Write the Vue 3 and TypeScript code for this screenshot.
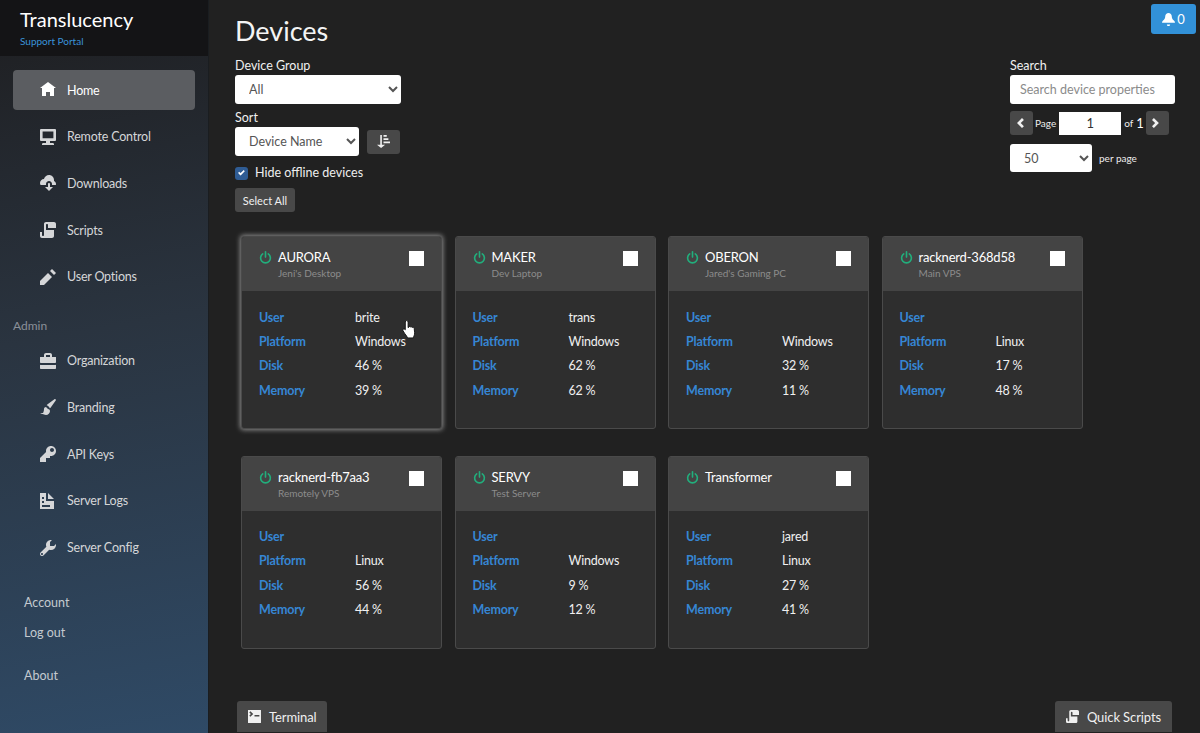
<script setup lang="ts">
const P = {
  home: 'M4 0l-4 3h1v4h2v-2h2v2h2v-4.03l1 .03-4-3z',
  monitor: 'M.5 0a.5.5 0 0 0-.5.5v5a.5.5 0 0 0 .5.5h2.5v1h-1c-.55 0-1 .23-1 .5v.5h6v-.5c0-.27-.45-.5-1-.5h-1v-1h2.500a.5.5 0 0 0 .5-.5v-5a.5.5 0 0 0-.5-.5h-7zm.8 1.200h5.400v3.400h-5.400v-3.400z',
  cloud: 'M4.5 0c-1.21 0-2.27.86-2.5 2-1.1 0-2 .9-2 2 0 .37.11.71.28 1h2.72v-.5c0-.83.67-1.5 1.5-1.5s1.5.67 1.5 1.5v.5h1.91c.06-.16.09-.32.09-.5 0-.65-.42-1.29-1-1.5v-.5c0-1.38-1.12-2.5-2.5-2.5zm-.16 4a.5.5 0 0 0-.34.5v1.5h-1.5l2 2 2-2h-1.5v-1.5a.5.5 0 0 0-.59-.5.5.5 0 0 0-.06 0z',
  script: 'M3 0c-.55 0-1 .45-1 1v5.5c0 .28-.22.5-.5.5s-.5-.22-.5-.5v-1.5h-1v2c0 .55.45 1 1 1h5c.55 0 1-.45 1-1v-3h-4v-2.5c0-.28.22-.5.5-.5s.5.22.5.5v1.500h4v-2c0-.55-.45-1-1-1h-4z',
  pencil: 'M6 0l-1 1 2 2 1-1-2-2zm-2 2l-4 4v2h2l4-4-2-2z',
  briefcase: 'M3 0c-.55 0-1 .45-1 1v1h-1.91l-.09.09v2.41c0 .28.22.5.5.5h7c.28 0 .5-.22.5-.5v-2.41l-.09-.09h-1.91v-1c0-.55-.45-1-1-1h-2zm0 1h2v1h-2v-1zm-3 4.91v1.59c0 .28.22.5.5.5h7c.28 0 .5-.22.5-.5v-1.59c-.16.06-.32.09-.5.09h-7c-.18 0-.34-.04-.5-.09z',
  brush: 'M7.44.03c-.03.01-.04.02-.06.03l-3.75 2.66c-.04.03-.1.11-.13.16l-.13.25c.72.23 1.27.78 1.5 1.5l.25-.13c.05-.03.12-.08.16-.13l2.66-3.75c.04-.05.04-.14 0-.22l-.22-.22c-.08-.08-.19-.18-.28-.16zm-4.44 3.97c-.55 0-1 .45-1 1 0 .65-.1 1.26-.34 1.75-.24.49-.66.25-1.66.25 1 .44 2.46 1 3 1 1.1 0 2-.9 2-2 0-.55-.45-1-1-1z',
  key: 'M5.5 0c-1.38 0-2.5 1.12-2.5 2.5 0 .16 0 .32.03.47l-3.03 3.03v2h3v-2h2v-1l.03-.03c.15.03.31.03.47.03 1.38 0 2.5-1.12 2.5-2.5s-1.12-2.5-2.5-2.5zm.5 1c.55 0 1 .45 1 1s-.45 1-1 1-1-.45-1-1 .45-1 1-1z',
  doc: 'M0 0v8h7v-4h-4v-4h-3zm4 0v3h3l-3-3zm-3 2h1v1h-1v-1zm0 2h1v1h-1v-1zm0 2h4v1h-4v-1z',
  wrench: 'M5.5 0c-1.38 0-2.5 1.12-2.5 2.5 0 .32.08.62.19.91l-2.91 2.88c-.39.39-.39 1.05 0 1.44.2.2.46.28.72.28.26 0 .52-.09.72-.28l2.88-2.91c.28.11.58.19.91.19 1.38 0 2.5-1.12 2.5-2.5 0-.16 0-.32-.03-.47l-.97.97h-2v-2l.97-.97c-.15-.03-.31-.03-.47-.03zm-4.5 6.5c.28 0 .5.22.5.5s-.22.5-.5.5-.5-.22-.5-.5.22-.5.5-.5z',
  terminal: 'M.09 0l-.09.09v7.81l.09.09h7.81l.09-.09v-7.81l-.09-.09h-7.81zm1.41.78l1.72 1.72-1.72 1.72-.72-.72 1-1-1-1 .72-.72zm2.5 2.22h3v1h-3v-1z',
  bell: 'M4 0c-1.1 0-2 .9-2 2 0 1.04-.52 1.98-1.34 2.66-.41.34-.66.82-.66 1.34h8c0-.52-.24-1-.66-1.34-.82-.68-1.34-1.62-1.34-2.66 0-1.1-.89-2-2-2zm-1 7c0 .55.45 1 1 1s1-.45 1-1h-2z',
  sort: 'M2 0v6h-2l2.5 2 2.5-2h-2v-6h-1zm2 0v1h2v-1h-2zm0 2v1h3v-1h-3zm0 2v1h4v-1h-4z',
  left: 'M4 0l-4 4 4 4 1.5-1.5-2.5-2.5 2.5-2.5-1.5-1.5z',
  right: 'M1.5 0l-1.5 1.5 2.5 2.5-2.5 2.5 1.5 1.5 4-4-4-4z',
  check: 'M6.41 0l-.69.72-2.78 2.78-.81-.78-.72-.72-1.41 1.41.72.72 1.5 1.5.69.72.72-.72 3.5-3.5.72-.72-1.44-1.41z',
}

const mainNav = [
  { label: 'Home', icon: P.home, active: true },
  { label: 'Remote Control', icon: P.monitor },
  { label: 'Downloads', icon: P.cloud },
  { label: 'Scripts', icon: P.script },
  { label: 'User Options', icon: P.pencil },
]
const adminNav = [
  { label: 'Organization', icon: P.briefcase },
  { label: 'Branding', icon: P.brush },
  { label: 'API Keys', icon: P.key },
  { label: 'Server Logs', icon: P.doc },
  { label: 'Server Config', icon: P.wrench },
]
const devices = [
  { name: 'AURORA', alias: "Jeni's Desktop", user: 'brite', platform: 'Windows', disk: 46, memory: 39, focus: true },
  { name: 'MAKER', alias: 'Dev Laptop', user: 'trans', platform: 'Windows', disk: 62, memory: 62 },
  { name: 'OBERON', alias: "Jared's Gaming PC", user: '', platform: 'Windows', disk: 32, memory: 11 },
  { name: 'racknerd-368d58', alias: 'Main VPS', user: '', platform: 'Linux', disk: 17, memory: 48 },
  { name: 'racknerd-fb7aa3', alias: 'Remotely VPS', user: '', platform: 'Linux', disk: 56, memory: 44 },
  { name: 'SERVY', alias: 'Test Server', user: '', platform: 'Windows', disk: 9, memory: 12 },
  { name: 'Transformer', alias: '', user: 'jared', platform: 'Linux', disk: 27, memory: 41 },
]
</script>

<template>
  <div class="app">
    <aside class="sidebar">
      <div class="brand">
        <div class="brand-name">Translucency</div>
        <div class="brand-sub">Support Portal</div>
      </div>
      <nav class="nav">
        <a v-for="n in mainNav" :key="n.label" class="nav-item" :class="{ active: n.active }">
          <svg class="nav-icon" viewBox="0 0 8 8"><path :d="n.icon" /></svg>
          <span>{{ n.label }}</span>
        </a>
        <div class="nav-head">Admin</div>
        <a v-for="n in adminNav" :key="n.label" class="nav-item">
          <svg class="nav-icon" viewBox="0 0 8 8"><path :d="n.icon" /></svg>
          <span>{{ n.label }}</span>
        </a>
      </nav>
      <div class="links">
        <a>Account</a>
        <a>Log out</a>
        <a class="about">About</a>
      </div>
    </aside>

    <main class="main">
      <button class="bell">
        <svg viewBox="0 0 8 8"><path :d="P.bell" /></svg><span>0</span>
      </button>
      <h1>Devices</h1>
      <div class="toolbar">
        <div class="filters">
          <label class="lbl">Device Group</label>
          <select class="sel group-sel"><option>All</option></select>
          <label class="lbl">Sort</label>
          <div class="sort-row">
            <select class="sel sort-sel"><option>Device Name</option></select>
            <button class="btn sort-btn"><svg viewBox="0 0 8 8"><path :d="P.sort" /></svg></button>
          </div>
          <label class="check-row">
            <span class="check"><svg viewBox="0 0 8 8"><path :d="P.check" /></svg></span>
            Hide offline devices
          </label>
          <button class="btn select-all">Select All</button>
        </div>
        <div class="search">
          <label class="lbl">Search</label>
          <input class="search-input" placeholder="Search device properties" />
          <div class="pager">
            <button class="btn page-btn"><svg viewBox="0 0 8 8"><path :d="P.left" /></svg></button>
            <span class="small page-word">Page</span>
            <input class="page-input" value="1" />
            <span class="small">of</span><span class="of-n">1</span>
            <button class="btn page-btn"><svg viewBox="0 0 8 8"><path :d="P.right" /></svg></button>
          </div>
          <div class="per">
            <select class="sel per-sel"><option>50</option></select>
            <span class="small">per page</span>
          </div>
        </div>
      </div>

      <div class="grid">
        <article v-for="d in devices" :key="d.name" class="card" :class="{ focus: d.focus }">
          <header class="card-head">
            <svg class="power" viewBox="0 0 16 16" fill="none">
              <path d="M4.6 3.6a6 6 0 1 0 6.8 0" />
              <path d="M8 1v6.5" />
            </svg>
            <div class="titles">
              <div class="dev-name">{{ d.name }}</div>
              <div class="dev-alias">{{ d.alias }}</div>
            </div>
            <span class="box"></span>
          </header>
          <dl class="props">
            <dt>User</dt><dd>{{ d.user }}</dd>
            <dt>Platform</dt><dd>{{ d.platform }}</dd>
            <dt>Disk</dt><dd>{{ d.disk }} %</dd>
            <dt>Memory</dt><dd>{{ d.memory }} %</dd>
          </dl>
          <svg v-if="d.focus" class="cursor" viewBox="0 0 16 22">
            <path d="M5 1.500c.9 0 1.500.6 1.500 1.500v6l.5-.2V8c.8-.5 1.600-.3 2 .4.700-.5 1.600-.3 2 .4.800-.4 1.900 0 2 1l.5 4.700c0 2.500-1 3.500-1.500 5.500H6c-.5-1.500-1.500-2.500-3-4.500L1.200 12.500c-.6-.9-.2-1.800.6-2 .7-.2 1.300.2 1.700.8V3c0-.9.6-1.500 1.500-1.500z" fill="#fff" stroke="#111" stroke-width="1"/>
          </svg>
        </article>
      </div>

      <div class="bottom">
        <button class="btn foot"><svg viewBox="0 0 8 8"><path :d="P.terminal" /></svg>Terminal</button>
        <button class="btn foot"><svg viewBox="0 0 8 8"><path :d="P.script" /></svg>Quick Scripts</button>
      </div>
    </main>
  </div>
</template>

<style>
html, body { margin: 0; background: #212121; overflow: hidden; }
</style>

<style scoped>
.app {
  display: flex;
  width: 1200px;
  height: 733px;
  overflow: hidden;
  background: #212121;
  color: #fff;
  font-family: Lato, "Noto Sans", sans-serif;
  font-size: 13px;
}
.sidebar {
  width: 208px;
  flex: none;
  border-right: 1px solid #1a1d20;
  background: linear-gradient(170deg, #1e1e20 0%, #2a3440 45%, #2f4a66 100%);
  display: flex;
  flex-direction: column;
}
.brand {
  height: 56px;
  box-sizing: border-box;
  padding: 7px 0 0 20px;
  background: #141416;
}
.brand-name { font-size: 20px; line-height: 24px; color: #fff; }
.brand-sub { font-size: 10px; line-height: 12px; margin-top: 4px; color: #3a93d8; }
.nav { padding: 14px 13px 0; }
.nav-item {
  display: flex;
  align-items: center;
  width: 182px;
  height: 40px;
  margin-bottom: 6.7px;
  box-sizing: border-box;
  padding-left: 27px;
  border-radius: 4px;
  font-size: 12.5px;
  letter-spacing: -0.2px;
  color: #d5d6d8;
}
.nav-item.active { background: #5b5d61; color: #fff; }
.nav-icon { width: 16px; height: 16px; margin-right: 11px; fill: currentColor; flex: none; }
.nav-head { font-size: 12px; line-height: 16px; color: #8a9099; margin: 21px 0 7px; }
.links { display: flex; flex-direction: column; padding: 14px 0 0 24px; font-size: 12.5px; color: #c4cad0; }
.links a { line-height: 30px; }
.links .about { margin-top: 13px; }

.main { position: relative; flex: 1; padding: 0 0 0 26px; min-width: 0; }
h1 { margin: 13px 0 0; font-size: 27px; font-weight: 400; line-height: 36px; color: #f4f4f4; }
.bell {
  position: absolute;
  top: 4px;
  right: 4px;
  width: 45px;
  height: 30px;
  border: 0;
  border-radius: 3px;
  background: #3291d8;
  color: #fff;
  font: 13px Lato, sans-serif;
  display: flex;
  align-items: center;
  justify-content: center;
  gap: 2px;
  padding: 0;
}
.bell svg { width: 13px; height: 13px; fill: #fff; }
.toolbar { display: flex; justify-content: space-between; padding-right: 25px; margin-top: 7px; }
.filters { display: flex; flex-direction: column; align-items: flex-start; }
.lbl { font-size: 12.5px; line-height: 19px; color: #f0f0f0; display: block; }
.sel {
  height: 29px;
  border: 0;
  border-radius: 3px;
  background: #fff;
  color: #555;
  font: 12.5px Lato, sans-serif;
  padding: 0 10px;
  box-sizing: border-box;
}
.group-sel { width: 166px; margin-bottom: 4px; }
.sort-row { display: flex; align-items: center; gap: 8px; }
.sort-sel { width: 124px; height: 29px; }
.btn {
  background: #484848;
  border: 0;
  border-radius: 3px;
  color: #f0f0f0;
  font-family: Lato, sans-serif;
  padding: 0;
  display: flex;
  align-items: center;
  justify-content: center;
}
.btn svg { fill: currentColor; }
.sort-btn { width: 33px; height: 24px; }
.sort-btn svg { width: 13px; height: 13px; }
.check-row { display: flex; align-items: center; font-size: 12.5px; line-height: 18px; margin-top: 8px; color: #eee; }
.check {
  width: 13px;
  height: 13px;
  margin-right: 7px;
  border-radius: 3px;
  background: #2f5c94;
  display: flex;
  align-items: center;
  justify-content: center;
}
.check svg { width: 7px; height: 7px; fill: #fff; }
.select-all { width: 60px; height: 24px; margin-top: 6px; font-size: 11px; }
.search { width: 165px; }
.search-input {
  display: block;
  width: 165px;
  height: 29px;
  border: 0;
  border-radius: 3px;
  box-sizing: border-box;
  padding: 0 10px;
  font: 12.5px Lato, sans-serif;
  background: #fff;
}
.search-input::placeholder { color: #8b8b8b; opacity: 1; }
.pager { display: flex; align-items: center; margin-top: 7px; height: 24px; }
.page-btn { width: 23px; height: 24px; }
.page-btn svg { width: 10px; height: 10px; }
.small { font-size: 10px; color: #eee; }
.page-word { margin-left: 2px; margin-right: 1px; }
.page-input {
  width: 62px;
  height: 23px;
  margin: 0 3px 0 2px;
  border: 0;
  box-sizing: border-box;
  text-align: center;
  font: 13px Lato, sans-serif;
  color: #333;
  padding: 0;
}
.of-n { font-size: 13px; margin: 0 2px 0 3px; }
.per { display: flex; align-items: center; gap: 7px; margin-top: 9px; }
.per-sel { width: 82px; height: 28px; }

.grid {
  display: grid;
  grid-template-columns: repeat(4, 201px);
  column-gap: 12.5px;
  row-gap: 26.5px;
  margin: 24px 0 0 6px;
}
.card {
  position: relative;
  height: 193px;
  box-sizing: border-box;
  border: 1px solid #4a4a4a;
  border-radius: 3px;
  background: #2e2e2e;
}
.card.focus { box-shadow: 0 0 5px 1px #8d8d8d; }
.card-head {
  height: 54px;
  box-sizing: border-box;
  background: #444;
  display: flex;
  padding: 12px 17px 0 17px;
  border-radius: 2px 2px 0 0;
}
.power { width: 13px; height: 13px; margin-top: 2px; stroke: #22ae7c; stroke-width: 2; stroke-linecap: round; flex: none; }
.titles { margin-left: 6px; flex: 1; min-width: 0; }
.dev-name { font-size: 13px; line-height: 16px; letter-spacing: -0.2px; color: #fff; }
.dev-alias { font-size: 10px; line-height: 12px; margin-top: 2px; color: #8c8c8c; }
.box { width: 15px; height: 15px; background: #fff; margin-top: 2px; flex: none; }
.props {
  display: grid;
  grid-template-columns: 96px 1fr;
  grid-auto-rows: 24.3px;
  margin: 14px 0 0 17px;
  align-items: center;
  font-size: 12.5px;
  letter-spacing: -0.2px;
}
.props dt { font-weight: 700; color: #3686d4; margin: 0; }
.props dd { margin: 0; color: #f0f0f0; }
.cursor { position: absolute; left: 160px; top: 82px; width: 15px; height: 21px; }
.bottom {
  display: flex;
  justify-content: space-between;
  margin: 52.5px 28px 0 2px;
}
.foot { height: 31px; padding: 0 11px; font-size: 13px; letter-spacing: -0.1px; gap: 8px; border-radius: 3px 3px 0 0; }
.foot svg { width: 13px; height: 13px; }
</style>
